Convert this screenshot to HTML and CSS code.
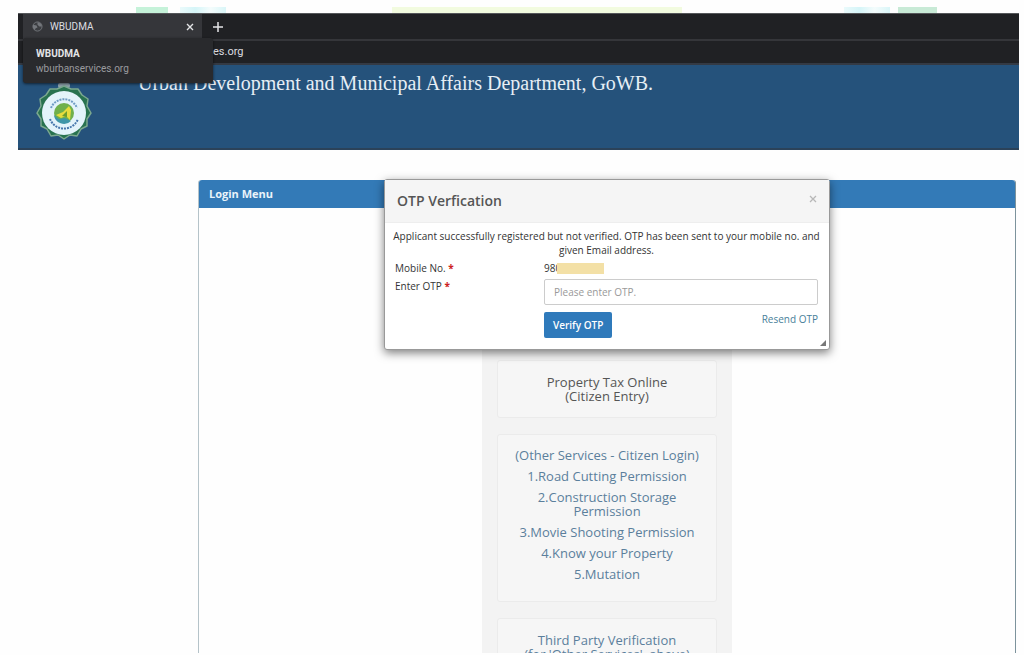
FILE: index.html
```
<!DOCTYPE html>
<html lang="en">
<head>
  <meta charset="UTF-8">
  <meta name="viewport" content="width=device-width, initial-scale=1.0">
  <title>WBUDMA</title>
  <link rel="stylesheet" href="styles.css">
</head>
<body>
  <div class="strip">
    <span class="bar green"></span>
    <span class="bar cyan"></span>
    <span class="bar lime"></span>
    <span class="bar cyan"></span>
    <span class="bar green small"></span>
  </div>

  <div class="window">
    <div class="tabs">
      <div class="tab">
        <svg class="globe" viewBox="0 0 12 12" width="11" height="11">
          <circle cx="6" cy="6" r="5" fill="#3c3e42" stroke="#74777c" stroke-width="1"/>
          <path d="M1 4l4 1 1 2-2 1-1 2-2-3zM6 1l4 2 1 3-3 0-2-2z" fill="#74777c"/>
        </svg>
        <span class="tab-name">WBUDMA</span>
        <button class="tab-close" aria-label="Close tab">
          <svg viewBox="0 0 8 8" width="8" height="8"><path d="M1 1l6 6M7 1L1 7" stroke="#e3e4e6" stroke-width="1.4"/></svg>
        </button>
      </div>
      <button class="tab-new" aria-label="New tab">
        <svg viewBox="0 0 10 10" width="10" height="10"><path d="M5 0v10M0 5h10" stroke="#e3e4e6" stroke-width="1.5"/></svg>
      </button>
    </div>
    <div class="address">es.org</div>
    <div class="tab-tip">
      <b>WBUDMA</b>
      <span>wburbanservices.org</span>
    </div>

    <header>
      <svg class="logo" viewBox="0 0 56 60" width="56" height="60">
        <rect x="22" y="2" width="12" height="5" rx="2" fill="#8fa3ad"/>
        <path d="M28 5 L35 8 L42 8 L46 14 L52 18 L51 25 L55 32 L51 38 L51 45 L45 48 L41 55 L34 54 L28 58 L22 54 L15 55 L11 48 L5 45 L5 38 L1 32 L5 25 L4 18 L10 14 L14 8 L21 8 Z" fill="#28724f" stroke="#7ba88f" stroke-width="1.5" stroke-linejoin="round"/>
        <circle cx="28" cy="32" r="22" fill="#e3f3fa"/>
        <path d="M15 27a14 14 0 0 1 26 0" fill="none" stroke="#6f9cc4" stroke-width="2" stroke-dasharray="2 1"/>
        <path d="M14 38a15 15 0 0 0 28 0" fill="none" stroke="#4777ad" stroke-width="2" stroke-dasharray="2 1"/>
        <circle cx="28" cy="32" r="10" fill="#6fb04c"/>
        <path d="M18 34a10 10 0 0 0 17 6l-6-3-6 1z" fill="#3f96a8"/>
        <path d="M20 34l7-3 6-6 2 4-1 10-4-4-5 2z" fill="#e6dc3c"/>
        <path d="M26 35l5-5v6z" fill="#6b9c2e"/>
      </svg>
      <h1>Urban Development and Municipal Affairs Department, GoWB.</h1>
    </header>

    <main>
      <section class="panel">
        <h2>Login Menu</h2>
        <div class="panel-body">
          <div class="menu">
            <div class="card">
              <p>Property Tax Online<br>(Citizen Entry)</p>
            </div>
            <div class="card services">
              <a href="#">(Other Services - Citizen Login)</a>
              <a href="#">1.Road Cutting Permission</a>
              <a href="#">2.Construction Storage Permission</a>
              <a href="#">3.Movie Shooting Permission</a>
              <a href="#">4.Know your Property</a>
              <a href="#">5.Mutation</a>
            </div>
            <div class="card">
              <a href="#">Third Party Verification<br>(for 'Other Services', above)</a>
            </div>
          </div>
        </div>

        <div class="modal" role="dialog" aria-labelledby="otp-title">
          <div class="modal-header">
            <h3 id="otp-title">OTP Verfication</h3>
            <button class="modal-close" aria-label="Close">
              <svg viewBox="0 0 8 8" width="8" height="8"><path d="M1 1l6 6M7 1L1 7" stroke="#b8b8b8" stroke-width="1.3"/></svg>
            </button>
          </div>
          <form class="modal-body">
            <p class="message">Applicant successfully registered but not verified. OTP has been sent to your mobile no. and given Email address.</p>
            <div class="fields">
              <span>Mobile No. <b class="req">*</b></span>
              <span class="mobile">980<i class="mask"></i></span>
              <label for="otp">Enter OTP <b class="req">*</b></label>
              <input type="text" id="otp" placeholder="Please enter OTP.">
              <div class="actions">
                <button type="submit" class="verify">Verify OTP</button>
                <a href="#">Resend OTP</a>
              </div>
            </div>
          </form>
          <svg class="grip" viewBox="0 0 6 6" width="6" height="6"><path d="M6 0v6H0z" fill="#777"/></svg>
        </div>
      </section>
    </main>
  </div>
</body>
</html>
```
FILE: styles.css
```
* {
  box-sizing: border-box;
}

body {
  margin: 0;
  height: 100vh;
  padding: 7px 5px 2px 18px;
  display: flex;
  flex-direction: column;
  overflow: hidden;
  background-color: #fefefe;
  font-family: "Open Sans", sans-serif;
  color: #333;
}

h1, h2, h3, p {
  margin: 0;
}

a {
  color: #5b7f9c;
  text-decoration: none;
}

button {
  border: none;
  padding: 0;
  background: none;
  cursor: pointer;
}

.strip {
  display: flex;
  height: 6px;
  flex-shrink: 0;
  padding: 0 82px 0 118px;
}

.bar.green {
  width: 32px;
  background-color: #c5f2d9;
}

.bar.green.small {
  width: 39px;
  margin-left: 8px;
  background-color: #c8ead6;
}

.bar.cyan {
  width: 46px;
  margin-left: 12px;
  background-image: linear-gradient(90deg, #eafafb, #d5f5f8, #f4fcfc, #d9f6f8);
}

.bar.lime {
  width: 290px;
  margin-left: 166px;
  margin-right: auto;
  background-color: #f2fbdf;
}

.window {
  position: relative;
  flex: 1;
  min-height: 0;
  overflow: hidden;
}

.tabs {
  display: flex;
  height: 28px;
  padding-left: 5px;
  background-color: #202124;
  border-top: 1px solid #55575a;
  border-bottom: 2px solid #35363a;
}

.tab {
  display: flex;
  align-items: center;
  gap: 7px;
  width: 179px;
  padding: 0 8px 0 9px;
  background-color: #35363a;
}

.tab-name {
  flex: 1;
  font-family: Roboto, sans-serif;
  font-size: 10px;
  color: #dcdde0;
}

.tab-close,
.tab-new {
  display: flex;
  align-items: center;
}

.tab-new {
  margin-left: 11px;
}

.address {
  height: 24px;
  padding-left: 195px;
  background-color: #202124;
  border-bottom: 2px solid #343a44;
  font-family: Roboto, sans-serif;
  font-size: 11px;
  line-height: 22px;
  color: #dcdde0;
}

.tab-tip {
  position: absolute;
  top: 25px;
  left: 5px;
  width: 190px;
  padding: 8px 13px 7px;
  display: flex;
  flex-direction: column;
  background-color: #292a2d;
  border-radius: 3px;
  box-shadow: 0 1px 3px rgba(0, 0, 0, 0.6);
  font-family: Roboto, sans-serif;
  font-size: 10px;
  line-height: 15px;
  color: #e3e4e6;
}

.tab-tip span {
  color: #9a9b9f;
}

header {
  display: flex;
  align-items: flex-start;
  gap: 46px;
  height: 85px;
  padding: 8px 18px;
  background-color: #25527b;
  border-bottom: 2px solid #2b4259;
}

.logo {
  margin-top: 8px;
  flex-shrink: 0;
}

header h1 {
  font-family: "Liberation Serif", serif;
  font-size: 20px;
  line-height: 20px;
  font-weight: normal;
  color: #e6eef5;
}

main {
  padding: 30px 3px 0 180px;
}

.panel {
  position: relative;
  border: 1px solid #b5c3c9;
  border-right-color: #7d939c;
  border-top: none;
  border-radius: 3px 3px 0 0;
}

.panel h2 {
  padding: 0 10px;
  background-color: #337ab7;
  border-radius: 3px 3px 0 0;
  font-size: 11px;
  line-height: 28px;
  font-weight: bold;
  color: #e9f3fa;
}

.panel-body {
  padding-top: 16px;
}

.menu {
  width: 250px;
  margin: auto;
  padding: 136px 15px 15px;
  display: flex;
  flex-direction: column;
  gap: 16px;
  background-color: #f3f3f3;
  font-size: 13px;
  line-height: 14px;
  text-align: center;
  color: #555;
}

.card {
  padding: 14px 12px;
  border: 1px solid #ebebeb;
  border-radius: 3px;
  background-color: #f6f6f6;
}

.card a {
  display: block;
}

.services {
  display: flex;
  flex-direction: column;
  gap: 7px;
  padding: 13px 12px 20px;
}

.modal {
  position: absolute;
  top: -1px;
  left: 0;
  right: 0;
  width: 446px;
  margin: auto;
  background-color: #fff;
  border: 1px solid #999;
  border-radius: 3px;
  box-shadow: 0 3px 10px rgba(0, 0, 0, 0.5);
}

.modal-header {
  display: flex;
  justify-content: space-between;
  padding: 11px 12px;
  background-color: #f5f5f5;
  border-bottom: 1px solid #eee;
}

.modal-header h3 {
  font-size: 14px;
  line-height: 20px;
  font-weight: 600;
  color: #555;
}

.modal-close {
  height: 12px;
}

.modal-body {
  padding: 6px 11px 11px 10px;
  font-size: 10px;
  line-height: 14px;
}

.message {
  margin: 0 -8px;
  text-align: center;
}

.fields {
  display: grid;
  grid-template-columns: 149px 1fr;
  row-gap: 4px;
  margin-top: 4px;
}

.req {
  color: #c22;
}

.mobile {
  display: flex;
  align-items: center;
}

.mask {
  width: 47px;
  height: 11px;
  margin-left: -4px;
  background-color: #f3e0a6;
}

.fields input {
  width: 100%;
  height: 26px;
  padding: 0 9px;
  border: 1px solid #ccc;
  border-radius: 2px;
  font-family: inherit;
  font-size: 10px;
}

.fields input::placeholder {
  color: #999;
}

.actions {
  grid-column: 2;
  display: flex;
  justify-content: space-between;
  align-items: flex-start;
  margin-top: 3px;
}

.actions a {
  color: #49809a;
}

.verify {
  padding: 0 9px;
  background-color: #2f7abb;
  border-radius: 2px;
  font-family: inherit;
  font-size: 10px;
  line-height: 26px;
  font-weight: 600;
  color: #fff;
}

.grip {
  position: absolute;
  right: 3px;
  bottom: 3px;
}
```
